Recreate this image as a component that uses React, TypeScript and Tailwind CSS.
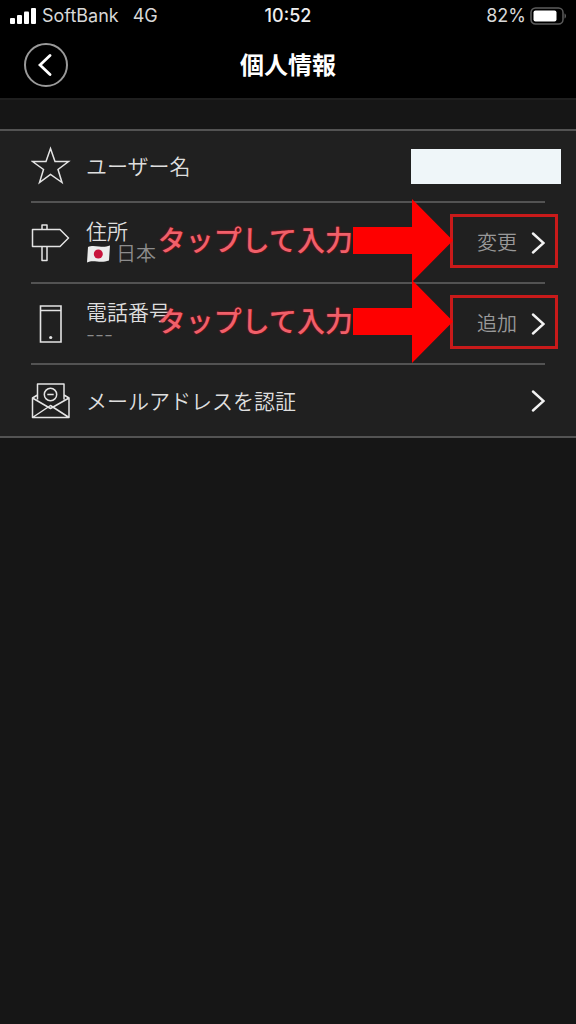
import type {ReactNode} from 'react';

function Chevron() {
  return (
    <svg width="14" height="22" viewBox="0 0 14 22" fill="none" stroke="#f2f2f2" strokeWidth="2.4" strokeLinecap="round" aria-hidden="true">
      <path d="M2 1.5 12.5 11 2 20.5" />
    </svg>
  );
}

function StarIcon() {
  return (
    <svg width="40" height="40" viewBox="0 0 40 40" fill="none" stroke="#e4e4e4" strokeWidth="1.5" aria-hidden="true">
      <path d="M19.500 2.500 24 15.500H37.500L27 23.500 31 36.500 19.500 28.500 8.500 36.500 12.500 23.500 1.500 15.500H15Z" />
    </svg>
  );
}

function SignIcon() {
  return (
    <svg width="40" height="40" viewBox="0 0 40 40" fill="none" stroke="#e4e4e4" strokeWidth="1.5" strokeLinejoin="round" aria-hidden="true">
      <path d="M1.500 6.500H29L37.500 15 29 23.500H1.500ZM11 6.500V2H16V6.500M11 23.500V37.500H16V23.500" />
    </svg>
  );
}

function PhoneIcon() {
  return (
    <svg width="40" height="40" viewBox="0 0 40 40" fill="none" stroke="#e4e4e4" strokeWidth="1.6" aria-hidden="true">
      <path d="M9.5 2H30V38H9.5ZM9.5 6.5H30" />
      <circle cx="19.700" cy="33.500" r="1.6" fill="#e4e4e4" stroke="none" />
    </svg>
  );
}

function MailIcon() {
  return (
    <svg width="40" height="40" viewBox="0 0 40 40" fill="none" stroke="#e4e4e4" strokeWidth="1.5" strokeLinejoin="round" aria-hidden="true">
      <path d="M6.5 18.5V3H33V18.5M6.5 14 1.500 17V36.5H38V17L33 14M1.500 17 19.500 27.5 38 17M1.500 36.5 19.500 24.500 38 36.5" />
      <circle cx="19.500" cy="13.5" r="6.2" />
      <path d="M16.300 13.5H22.700" />
    </svg>
  );
}

function JapanFlag() {
  return (
    <svg width="24" height="18" viewBox="0 0 24 18" aria-hidden="true">
      <path d="M2 2C5 .500 9 1 13 1.500S20 2 24 .500L23 15.500C19 17 15 17 11 16.500S4 16 1 17.500Z" fill="#ececec" />
      <circle cx="12.300" cy="9" r="4.500" fill="#c8143c" />
    </svg>
  );
}

// 赤い矢印つきの案内
function TapHint() {
  return (
    <div className="pointer-events-none absolute -top-1 right-[92px] z-10 flex items-center">
      <span className="mb-1 whitespace-nowrap text-[28px] leading-8 font-medium text-[#f0606a] [text-shadow:0_0_2px_#c00010]">タップして入力</span>
      <svg width="100" height="83" viewBox="0 0 100 83" fill="#fe0000" aria-hidden="true">
        <path d="M0 28H59V0L100 41.5 59 83V55H0Z" />
      </svg>
    </div>
  );
}

function ActionButton({label}: {label: string}) {
  return (
    <button type="button" className="mb-1 -mr-[13px] flex h-[54px] items-center gap-3.5 border-3 border-[#c91a1a] pt-1 pr-2.5 pl-6 text-xl leading-6 font-[350] text-[#999]">
      <span className="pb-0.5">{label}</span>
      <Chevron />
    </button>
  );
}

type RowProps = {
  icon: ReactNode;
  title: string;
  sub?: ReactNode;
  className: string;
  children: ReactNode;
};

function Row({icon, title, sub, className, children}: RowProps) {
  return (
    <li className={`relative mx-[31px] flex items-center border-[#535353] ${className}`}>
      {icon}
      <div className="ml-[15px] flex-1 pb-0.5 text-[21px] leading-6 font-[350] text-[#dedede]">
        <p>{title}</p>
        {sub && <p className="flex items-center gap-1.5 font-['Inter','Noto_Sans_CJK_JP',sans-serif] text-xl leading-6 text-[#8c8c8c]">{sub}</p>}
      </div>
      {children}
    </li>
  );
}

export default function App() {
  return (
    <div lang="ja" className="min-h-screen bg-[#161616] font-['Noto_Sans_CJK_JP',sans-serif] text-white">
      <header className="border-b-2 border-[#1f1f1f] bg-black">
        <div className="grid h-8 grid-cols-3 items-center px-2.5 font-['Inter','Noto_Sans_CJK_JP',sans-serif] text-lg leading-6 text-[#d8d8d8]">
          <div className="flex items-center gap-1.5">
            <svg width="26" height="16" viewBox="0 0 26 16" fill="#fff" aria-hidden="true">
              <rect x="0" y="10" width="5" height="6" rx="1" />
              <rect x="7" y="7" width="5" height="9" rx="1" />
              <rect x="14" y="3.500" width="5" height="12.500" rx="1" />
              <rect x="21" y="0" width="5" height="16" rx="1" />
            </svg>
            <span>SoftBank</span>
            <span className="ml-2">4G</span>
          </div>
          <span className="text-center font-medium text-[#eee]">10:52</span>
          <div className="flex items-center justify-end gap-1">
            <span>82%</span>
            <svg width="36" height="18" viewBox="0 0 36 18" aria-hidden="true">
              <rect x="1" y="1" width="32" height="16" rx="4.500" fill="none" stroke="#5c5c5c" strokeWidth="1.500" />
              <rect x="3.500" y="3.500" width="23" height="11" rx="2" fill="#fff" />
              <path d="M34.500 6.500C36.500 7 36.500 11 34.500 11.500Z" fill="#5c5c5c" />
            </svg>
          </div>
        </div>
        <div className="grid h-[66px] grid-cols-3 items-center px-6">
          <button type="button" aria-label="戻る" className="flex size-11 items-center justify-center rounded-full border-2 border-[#9a9a9a] pr-0.5">
            <svg width="14" height="22" viewBox="0 0 14 22" fill="none" stroke="#fff" strokeWidth="2.8" strokeLinecap="round" aria-hidden="true">
              <path d="M12 1.500 2 11 12 20.500" />
            </svg>
          </button>
          <h1 className="pb-0.5 text-center text-2xl font-bold">個人情報</h1>
        </div>
      </header>

      <ul className="mt-[29px] border-y-2 border-[#535353] bg-[#202020]">
        <Row icon={<StarIcon />} title="ユーザー名" className="h-[72px] border-b-2">
          <span className="-mr-4 h-[35px] w-[150px] bg-[#eff6f9]" />
        </Row>
        <Row
          icon={<SignIcon />}
          title="住所"
          sub={<><JapanFlag />日本</>}
          className="h-[81px] border-b-2"
        >
          <TapHint />
          <ActionButton label="変更" />
        </Row>
        <Row icon={<PhoneIcon />} title="電話番号" sub="---" className="h-[81px] border-b-2">
          <TapHint />
          <ActionButton label="追加" />
        </Row>
        <Row icon={<MailIcon />} title="メールアドレスを認証" className="h-[71px]">
          <button type="button" aria-label="メールアドレスを認証">
            <Chevron />
          </button>
        </Row>
      </ul>
    </div>
  );
}
